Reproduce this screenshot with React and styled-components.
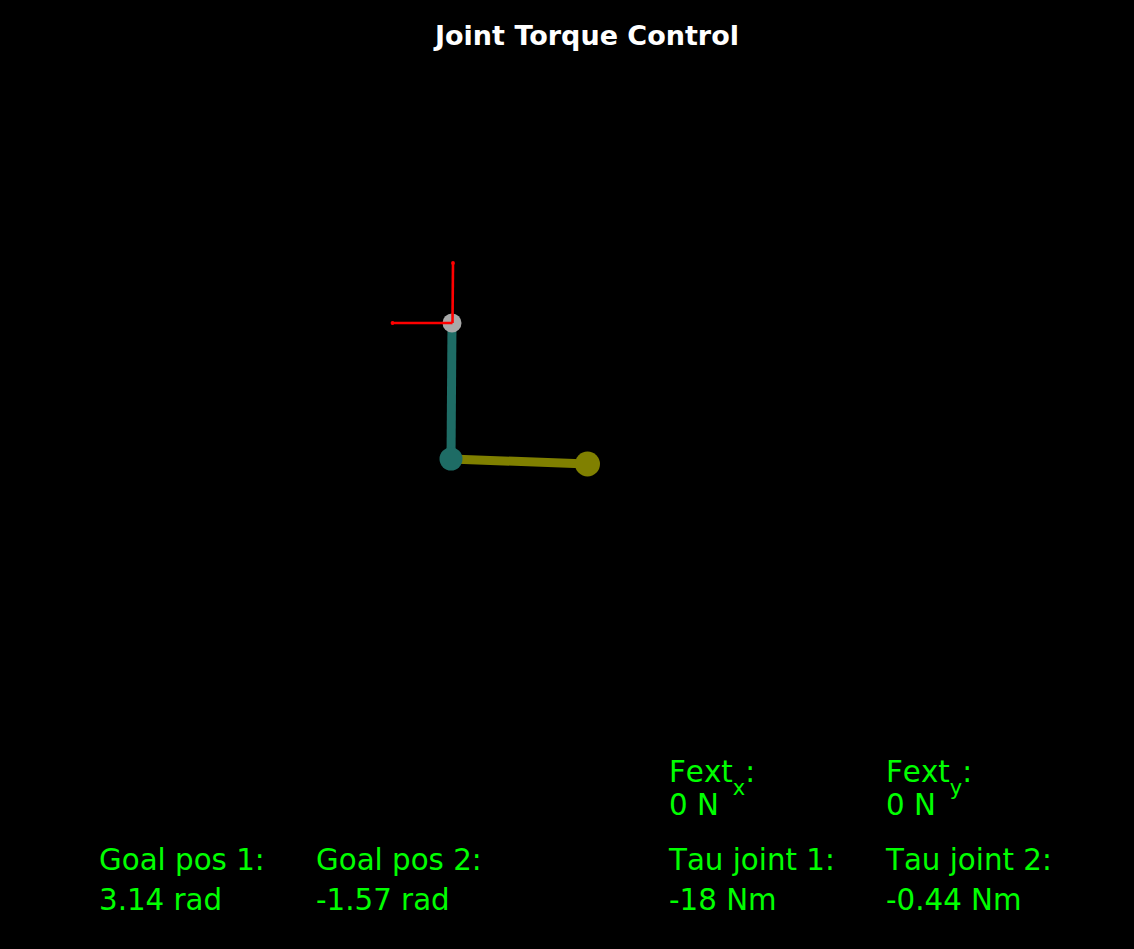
import React from "react";
import styled, { createGlobalStyle } from "styled-components";

const GlobalStyle = createGlobalStyle`
  html, body {
    margin: 0;
    padding: 0;
    background: #000;
  }
  body {
    font-family: "DejaVu Sans", "Liberation Sans", sans-serif;
  }
`;

const Page = styled.div`
  width: 1134px;
  height: 949px;
  background: #000;
  display: flex;
  flex-direction: column;
  overflow: hidden;
`;

const Title = styled.h1`
  box-sizing: border-box;
  height: 60px;
  margin: 0;
  padding: 20px 0 0 40px;
  text-align: center;
  font-size: 27px;
  font-weight: bold;
  line-height: normal;
  color: #fff;
`;

const Plot = styled.svg`
  display: block;
  width: 1134px;
  height: 690px;
`;

const Readouts = styled.div`
  display: grid;
  grid-template-columns: 217px 353px 217px 1fr;
  grid-template-rows: 66px auto;
  row-gap: 18px;
  padding: 6px 0 0 99px;
  color: #00ff00;
  font-size: 29.3px;
  font-kerning: none;
`;

const Readout = styled.div`
  grid-column: ${(p) => p.col};
  grid-row: ${(p) => p.row};
  line-height: ${(p) => (p.tight ? "33px" : "40px")};
  white-space: nowrap;
`;

const Sub = styled.sub`
  font-size: 21px;
  line-height: 0;
  vertical-align: -13px;
`;

const base = { x: 452, y: 323 };
const elbow = { x: 451, y: 459 };
const tip = { x: 587.5, y: 464 };

function Arm() {
  return (
    <Plot viewBox="0 60 1134 690">
      <line x1={base.x} y1={base.y} x2={elbow.x} y2={elbow.y} stroke="#1e6c65" strokeWidth="9" />
      <line x1={elbow.x} y1={elbow.y} x2={tip.x} y2={tip.y} stroke="#808000" strokeWidth="9" />
      <circle cx={base.x} cy={base.y} r="9.5" fill="#a9a9a9" />
      <circle cx={elbow.x} cy={elbow.y} r="11.5" fill="#1e6c65" />
      <circle cx={tip.x} cy={tip.y} r="12.5" fill="#808000" />
      <line x1={453} y1={263} x2={452.5} y2={323} stroke="#ff0000" strokeWidth="2.6" />
      <line x1={392} y1={323} x2={452.5} y2={323} stroke="#ff0000" strokeWidth="2.6" />
      <circle cx={453} cy={263} r="1.9" fill="#ff0000" />
      <circle cx={392.5} cy={323} r="1.9" fill="#ff0000" />
    </Plot>
  );
}

export default function App() {
  return (
    <Page>
      <GlobalStyle />
      <Title>Joint Torque Control</Title>
      <Arm />
      <Readouts>
        <Readout col={3} row={1} tight>
          Fext<Sub>x</Sub>:
          <br />0 N
        </Readout>
        <Readout col={4} row={1} tight>
          Fext<Sub>y</Sub>:
          <br />0 N
        </Readout>
        <Readout col={1} row={2}>
          Goal pos 1:
          <br />3.14 rad
        </Readout>
        <Readout col={2} row={2}>
          Goal pos 2:
          <br />-1.57 rad
        </Readout>
        <Readout col={3} row={2}>
          Tau joint 1:
          <br />-18 Nm
        </Readout>
        <Readout col={4} row={2}>
          Tau joint 2:
          <br />-0.44 Nm
        </Readout>
      </Readouts>
    </Page>
  );
}
